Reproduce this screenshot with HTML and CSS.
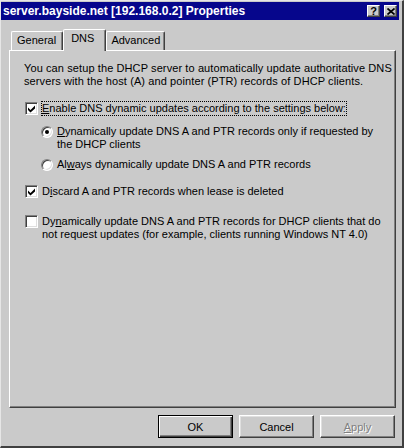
FILE: index.html
```html
<!DOCTYPE html>
<html lang="en">
<head>
    <meta charset="UTF-8">
    <meta name="viewport" content="width=device-width, initial-scale=1.0">
    <title>server.bayside.net Properties</title>
    <link rel="stylesheet" href="styles.css">
</head>
<body>
    <div class="window">
        <div class="titlebar">
            <span class="title">server.bayside.net [192.168.0.2] Properties</span>
            <div class="caption">
                <span class="cap-btn help">?</span>
                <span class="cap-btn">
                    <svg width="8" height="7" viewBox="0 0 8 7">
                        <path d="M0.5 0.5 L7.5 6.5 M7.5 0.5 L0.5 6.5" stroke="#000" stroke-width="1.7"/>
                    </svg>
                </span>
            </div>
        </div>
        <div class="content">
            <div class="tabs">
                <div class="tab">General</div>
                <div class="tab active">DNS</div>
                <div class="tab last">Advanced</div>
            </div>
            <div class="panel">
                <p class="intro">You can setup the DHCP server to automatically update authoritative DNS<br>servers with the host (A) and pointer (PTR) records of DHCP clients.</p>

                <div class="option first">
                    <span class="check on">
                        <svg width="9" height="9" viewBox="0 0 9 9"><polygon points="1,3.5 3.5,6 8,1.5 8,4.5 3.5,8.5 1,6" fill="#000"/></svg>
                    </span>
                    <span class="label focus"><u>E</u>nable DNS dynamic updates according to the settings below:</span>
                </div>

                <div class="option sub r1">
                    <span class="radio on"></span>
                    <span class="label"><u>D</u>ynamically update DNS A and PTR records only if requested by<br>the DHCP clients</span>
                </div>
                <div class="option sub r2">
                    <span class="radio"></span>
                    <span class="label">Al<u>w</u>ays dynamically update DNS A and PTR records</span>
                </div>

                <div class="option c2">
                    <span class="check on">
                        <svg width="9" height="9" viewBox="0 0 9 9"><polygon points="1,3.5 3.5,6 8,1.5 8,4.5 3.5,8.5 1,6" fill="#000"/></svg>
                    </span>
                    <span class="label">D<u>i</u>scard A and PTR records when lease is deleted</span>
                </div>

                <div class="option c3">
                    <span class="check"></span>
                    <span class="label">Dy<u>n</u>amically update DNS A and PTR records for DHCP clients that do<br>not request updates (for example, clients running Windows NT 4.0)</span>
                </div>
            </div>
            <div class="buttons">
                <button class="btn default">OK</button>
                <button class="btn">Cancel</button>
                <button class="btn disabled"><u>A</u>pply</button>
            </div>
        </div>
    </div>
</body>
</html>
```

FILE: styles.css
```css
body {
    margin: 0;
    background-color: #cacaca;
    font-family: "Liberation Sans", Arial, sans-serif;
    font-size: 11px;
    color: #000;
}
.window {
    width: 404px;
    height: 448px;
    box-sizing: border-box;
    display: flex;
    flex-direction: column;
    border-style: solid;
    border-width: 1px 2px 2px 1px;
    border-color: #e6e6e6 #404040 #404040 #e6e6e6;
    padding: 1px 3px 0 0;
    background-color: #cacaca;
}
.titlebar {
    height: 18px;
    flex-shrink: 0;
    display: flex;
    align-items: center;
    justify-content: space-between;
    background-color: #06068c;
    padding: 0 2px 0 2px;
}
.title {
    color: #fff;
    font-weight: bold;
    font-size: 12px;
    white-space: nowrap;
}
.caption {
    display: flex;
    gap: 4px;
}
.cap-btn {
    width: 13px;
    height: 12px;
    box-sizing: border-box;
    display: flex;
    justify-content: center;
    align-items: center;
    background-color: #cacaca;
    border: 1px solid;
    border-color: #fff #404040 #404040 #fff;
    box-shadow: inset -1px -1px #808080;
    font-weight: bold;
    font-size: 11px;
    line-height: 10px;
}
.content {
    flex: 1;
    display: flex;
    flex-direction: column;
    padding: 9px 3px 8px 8px;
}
.tabs {
    height: 21px;
    flex-shrink: 0;
    display: flex;
    align-items: flex-end;
    padding-left: 2px;
}
.tab {
    height: 19px;
    box-sizing: border-box;
    padding: 2px 6px 0 5px;
    line-height: 13px;
    border: 1px solid;
    border-bottom: none;
    border-color: #fff #404040 transparent #fff;
    box-shadow: inset -1px 0 #808080;
    border-radius: 2px 2px 0 0;
    white-space: nowrap;
}
.tab.active {
    height: 22px;
    margin-bottom: -1px;
    padding: 2px 11px 0 7px;
    background-color: #cacaca;
    position: relative;
    z-index: 1;
}
.tab.last {
    padding: 2px 4px 0 4px;
}
.panel {
    flex: 1;
    box-sizing: border-box;
    border: 1px solid;
    border-color: #fff #404040 #404040 #fff;
    box-shadow: inset -1px -1px #808080;
    padding: 11px 4px 0 14px;
    white-space: nowrap;
}
.intro {
    margin: 0;
    line-height: 13px;
    letter-spacing: 0.1px;
}
.option {
    display: flex;
    align-items: flex-start;
    gap: 4px;
    line-height: 13px;
}
.option.first { margin-top: 14px; }
.option.r1 { margin-top: 10px; }
.option.r2 { margin-top: 7px; }
.option.c2 { margin-top: 14px; }
.option.c3 { margin-top: 17px; }
.option.sub {
    padding-left: 17px;
}
.check {
    width: 13px;
    height: 13px;
    flex-shrink: 0;
    box-sizing: border-box;
    margin-left: 1px;
    background-color: #fff;
    border: 1px solid;
    border-color: #808080 #fff #fff #808080;
    box-shadow: inset 1px 1px #404040, inset -1px -1px #dfdfdf;
    padding: 1px;
    display: flex;
}
.check svg {
    display: block;
}
.radio {
    width: 12px;
    height: 12px;
    flex-shrink: 0;
    box-sizing: border-box;
    margin-top: 1px;
    border-radius: 50%;
    background-color: #fff;
    border: 1px solid;
    border-color: #808080 #fff #fff #808080;
    box-shadow: inset 1px 1px #404040, inset -1px -1px #dfdfdf;
    display: flex;
    justify-content: center;
    align-items: center;
}
.radio.on::after {
    content: "";
    width: 4px;
    height: 4px;
    border-radius: 50%;
    background-color: #000;
}
.focus {
    outline: 1px dotted #000;
    outline-offset: 0;
}
.buttons {
    display: flex;
    justify-content: flex-end;
    gap: 6px;
    padding: 7px 1px 0 0;
}
.btn {
    width: 75px;
    height: 23px;
    box-sizing: border-box;
    font-family: inherit;
    font-size: 11px;
    color: #000;
    background-color: #cacaca;
    border: 1px solid;
    border-color: #fff #404040 #404040 #fff;
    box-shadow: inset -1px -1px #808080, inset 1px 1px #dfdfdf;
    padding: 0;
}
.btn.default {
    border: 1px solid #000;
    box-shadow: inset 1px 1px #fff, inset -1px -1px #404040, inset -2px -2px #808080;
}
.btn.disabled {
    color: #808080;
    text-shadow: 1px 1px #fff;
}
```
